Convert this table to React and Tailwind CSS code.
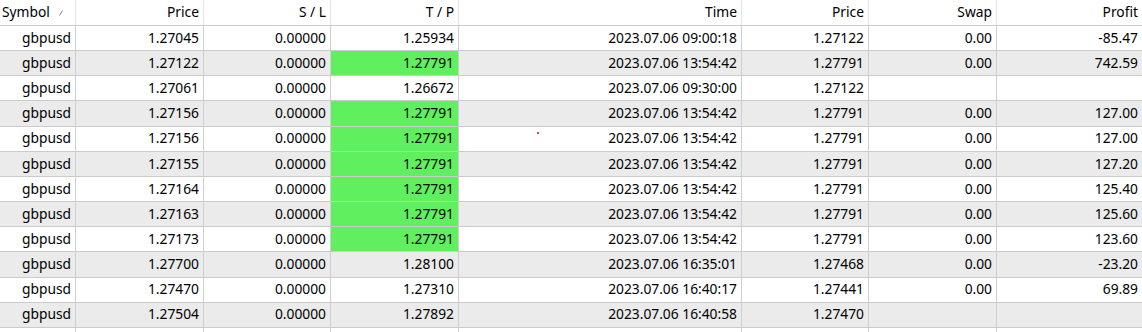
const columns = [
    { key: 'symbol', label: 'Symbol', w: 'w-[76px]' },
    { key: 'price', label: 'Price', w: 'w-[128px]' },
    { key: 'sl', label: 'S / L', w: 'w-[127px]' },
    { key: 'tp', label: 'T / P', w: 'w-[128px]' },
    { key: 'time', label: 'Time', w: 'w-[283px]' },
    { key: 'cur', label: 'Price', w: 'w-[127px]' },
    { key: 'swap', label: 'Swap', w: 'w-[128px]' },
    { key: 'profit', label: 'Profit', w: 'flex-1' },
]

const rows = [
    ['1.27045', '1.25934', false, '2023.07.06 09:00:18', '1.27122', '0.00', '-85.47'],
    ['1.27122', '1.27791', true, '2023.07.06 13:54:42', '1.27791', '0.00', '742.59'],
    ['1.27061', '1.26672', false, '2023.07.06 09:30:00', '1.27122', '', ''],
    ['1.27156', '1.27791', true, '2023.07.06 13:54:42', '1.27791', '0.00', '127.00'],
    ['1.27156', '1.27791', true, '2023.07.06 13:54:42', '1.27791', '0.00', '127.00'],
    ['1.27155', '1.27791', true, '2023.07.06 13:54:42', '1.27791', '0.00', '127.20'],
    ['1.27164', '1.27791', true, '2023.07.06 13:54:42', '1.27791', '0.00', '125.40'],
    ['1.27163', '1.27791', true, '2023.07.06 13:54:42', '1.27791', '0.00', '125.60'],
    ['1.27173', '1.27791', true, '2023.07.06 13:54:42', '1.27791', '0.00', '123.60'],
    ['1.27700', '1.28100', false, '2023.07.06 16:35:01', '1.27468', '0.00', '-23.20'],
    ['1.27470', '1.27310', false, '2023.07.06 16:40:17', '1.27441', '0.00', '69.89'],
    ['1.27504', '1.27892', false, '2023.07.06 16:40:58', '1.27470', '', ''],
]

const Cell = ({ w, green, last, children }) => (
    <div
        className={`${w} h-full flex items-center justify-end pr-[4px] ${last ? '' : 'border-r border-[#cfcfcf]'} ${green ? 'bg-[#5fef5f]' : ''}`}
    >
        {children}
    </div>
)

const App = () => {
    return (
        <div className="relative w-[1142px] h-[332px] overflow-hidden bg-white text-black text-[13.8px] font-['Noto_Sans',sans-serif]">
            {/* header */}
            <div className="flex h-[26px] border-b border-[#cbcbcb]">
                {columns.map((c, i) => (
                    <div
                        key={c.key}
                        className={`${c.w} h-full flex items-center ${i === 0 ? 'justify-start pl-[2px]' : 'justify-end pr-[4px]'} ${i < columns.length - 1 ? 'border-r border-[#e4e4e4]' : ''}`}
                    >
                        {c.label}
                        {i === 0 && (
                            <svg className="ml-[9px] mt-[1px]" width="4" height="6" viewBox="0 0 4 6">
                                <path d="M0.5 5.5 L3.5 0.5" stroke="#8a7b96" strokeWidth="1" />
                            </svg>
                        )}
                    </div>
                ))}
            </div>

            {/* body */}
            {rows.map((r, i) => (
                <div
                    key={i}
                    className={`flex h-[25.17px] border-b border-[#cbcbcb] ${i % 2 === 1 ? 'bg-[#ebebeb]' : 'bg-white'}`}
                >
                    <Cell w="w-[76px]">gbpusd</Cell>
                    <Cell w="w-[128px]">{r[0]}</Cell>
                    <Cell w="w-[127px]">0.00000</Cell>
                    <Cell w="w-[128px]" green={r[2]}>{r[1]}</Cell>
                    <Cell w="w-[283px]">{r[3]}</Cell>
                    <Cell w="w-[127px]">{r[4]}</Cell>
                    <Cell w="w-[128px]">{r[5]}</Cell>
                    <Cell w="flex-1" last>{r[6]}</Cell>
                </div>
            ))}
            <div className="flex h-[25px]">
                <Cell w="w-[76px]" />
                <Cell w="w-[128px]" />
                <Cell w="w-[127px]" />
                <Cell w="w-[128px]" />
                <Cell w="w-[283px]" />
                <Cell w="w-[127px]" />
                <Cell w="w-[128px]" />
                <Cell w="flex-1" last />
            </div>

            {/* stray cursor dot */}
            <span className="absolute left-[537px] top-[132px] w-[2px] h-[2px] bg-[#f2453a]" />
        </div>
    )
}

export default App
